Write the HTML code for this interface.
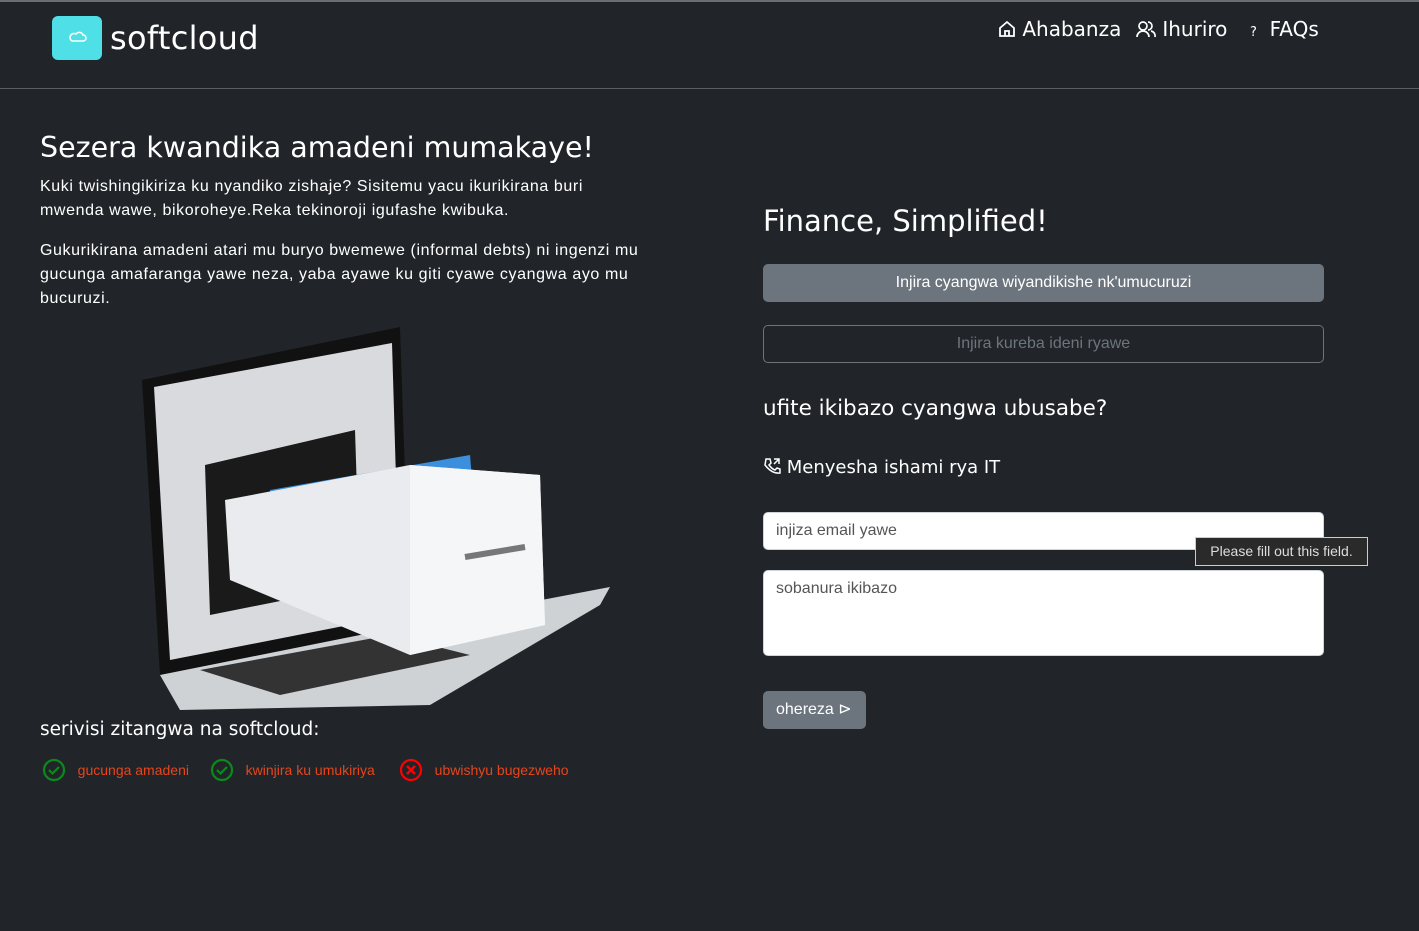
<!DOCTYPE html>
<html><head><meta charset="utf-8"><style>
*{box-sizing:border-box;margin:0;padding:0}
body{width:1419px;height:931px;background:#212529;color:#fff;font-family:"Liberation Sans",sans-serif;position:relative;overflow:hidden}
.top{position:absolute;left:0;top:0;width:1419px;height:2px;background:#6b6f74}
.hdr{position:absolute;left:0;top:88px;width:1419px;height:1px;background:#5a5e63}
.logo{position:absolute;left:52px;top:16px;width:50px;height:44px;background:#4ee0e6;border-radius:6px}
.brand{position:absolute;left:110px;top:19px;font-size:32px;font-family:"DejaVu Sans",sans-serif;letter-spacing:0.3px}
.nav{position:absolute;top:17px;font-size:20px;font-family:"DejaVu Sans",sans-serif}
h1{position:absolute;left:40px;top:131px;font-size:28.5px;font-weight:normal;font-family:"DejaVu Sans",sans-serif}
.p{position:absolute;left:40px;font-size:16px;line-height:24px;letter-spacing:0.6px;width:600px}
h2{position:absolute;left:763px;top:204px;font-size:29px;font-weight:normal;font-family:"DejaVu Sans",sans-serif}
.b1{position:absolute;left:763px;top:264px;width:561px;height:38px;background:#6c757d;border-radius:5px;text-align:center;line-height:38px;font-size:16px}
.b2{position:absolute;left:763px;top:325px;width:561px;height:38px;border:1px solid #6c757d;border-radius:5px;text-align:center;line-height:36px;font-size:16px;color:#6c757d}
h3{position:absolute;left:763px;top:396px;font-size:21.5px;font-weight:normal;font-family:"DejaVu Sans",sans-serif}
.it{position:absolute;left:763px;top:457px;font-size:18px;font-family:"DejaVu Sans",sans-serif}
.in{position:absolute;left:763px;width:561px;background:#fff;border:1px solid #ced4da;border-radius:5px;color:#555;font-size:16px;padding:9px 12px}
.tip{position:absolute;left:1195px;top:537px;width:173px;height:29px;background:#2a2a2a;border:1px solid #ccc;font-size:14px;line-height:27px;text-align:center;color:#ddd}
.send{position:absolute;left:763px;top:691px;width:103px;height:38px;background:#6c757d;border-radius:5px;font-size:16px;line-height:38px;padding-left:13px}
.svc{position:absolute;left:40px;top:719px;font-size:18.5px;font-family:"DejaVu Sans",sans-serif}
.ck{position:absolute;top:758px;font-size:14px;color:#e8441a;line-height:24px}
</style></head><body>
<div class="top"></div>
<div class="logo"><svg width="50" height="44"><path d="M20 25 h11 a3 3 0 0 0 0-6 a4 4 0 0 0-7-1 a3 3 0 0 0-4 7z" fill="none" stroke="#fff" stroke-width="1.5"/></svg></div>
<div class="brand">softcloud</div>
<div class="nav" style="left:998px"><svg width="18" height="18" style="vertical-align:-2px"><path d="M2 8 L9 2 L16 8 V16 H2Z M7 16 V11 H11 V16" fill="none" stroke="#fff" stroke-width="1.8"/></svg> Ahabanza</div>
<div class="nav" style="left:1136px"><svg width="20" height="18" style="vertical-align:-2px"><circle cx="7" cy="6" r="4" fill="none" stroke="#fff" stroke-width="1.7"/><path d="M1 17 a6 6 0 0 1 12 0 M12 2 a4 4 0 0 1 0 8 M15 11 a5 5 0 0 1 4 6" fill="none" stroke="#fff" stroke-width="1.7"/></svg> Ihuriro</div>
<div class="nav" style="left:1250px"><span style="font-size:13px">?</span>&nbsp; FAQs</div>
<div class="hdr"></div>
<h1>Sezera kwandika amadeni mumakaye!</h1>
<div class="p" style="top:175px">Kuki twishingikiriza ku nyandiko zishaje? Sisitemu yacu ikurikirana buri mwenda wawe, bikoroheye.Reka tekinoroji igufashe kwibuka.</div>
<div class="p" style="top:239px">Gukurikirana amadeni atari mu buryo bwemewe (informal debts) ni ingenzi mu gucunga amafaranga yawe neza, yaba ayawe ku giti cyawe cyangwa ayo mu bucuruzi.</div>
<svg style="position:absolute;left:130px;top:325px" width="490" height="385">
<path d="M12 55 L270 2 L280 300 L30 350Z" fill="#111"/>
<path d="M24 62 L262 18 L270 290 L40 335Z" fill="#d8dadd"/>
<path d="M75 140 L225 105 L230 260 L80 290Z" fill="#1a1a1a"/>
<path d="M30 350 L280 300 L480 262 L470 280 L300 380 L50 385Z" fill="#cfd2d5"/>
<path d="M70 345 L260 310 L340 330 L150 370Z" fill="#333"/>
<path d="M140 165 L340 130 L345 190 L145 225Z" fill="#3b8fdc"/>
<path d="M95 175 L280 140 L410 150 L415 300 L280 330 L100 255Z" fill="#e9ebee"/>
<path d="M280 140 L410 150 L415 300 L280 330Z" fill="#f5f6f7"/>
<path d="M335 232 L395 222" stroke="#777" stroke-width="6"/>
</svg>
<div class="svc">serivisi zitangwa na softcloud:</div>
<div class="ck" style="left:42px"><svg width="24" height="24" style="vertical-align:-7px"><circle cx="12" cy="12" r="10" fill="none" stroke="#0a8a1a" stroke-width="2.2"/><path d="M7 12 l3.5 3.5 l6.5-6.5" fill="none" stroke="#0a8a1a" stroke-width="2.2"/></svg>&nbsp;&nbsp; gucunga amadeni</div>
<div class="ck" style="left:210px"><svg width="24" height="24" style="vertical-align:-7px"><circle cx="12" cy="12" r="10" fill="none" stroke="#0a8a1a" stroke-width="2.2"/><path d="M7 12 l3.5 3.5 l6.5-6.5" fill="none" stroke="#0a8a1a" stroke-width="2.2"/></svg>&nbsp;&nbsp; kwinjira ku umukiriya</div>
<div class="ck" style="left:399px"><svg width="24" height="24" style="vertical-align:-7px"><circle cx="12" cy="12" r="10" fill="none" stroke="#f00" stroke-width="2.2"/><path d="M8 8 l8 8 M16 8 l-8 8" stroke="#f00" stroke-width="2.5"/></svg>&nbsp;&nbsp; ubwishyu bugezweho</div>
<h2>Finance, Simplified!</h2>
<div class="b1">Injira cyangwa wiyandikishe nk'umucuruzi</div>
<div class="b2">Injira kureba ideni ryawe</div>
<h3>ufite ikibazo cyangwa ubusabe?</h3>
<div class="it"><svg width="18" height="18" style="vertical-align:-2px"><path d="M3 2 L7 2 L8 6 L6 8 Q9 12 12 13 L14 11 L17 12 V16 Q9 17 2 8 Z M11 2 h5 v5 M16 2 l-5 5" fill="none" stroke="#fff" stroke-width="1.5"/></svg> Menyesha ishami rya IT</div>
<div class="in" style="top:512px;height:38px">injiza email yawe</div>
<div class="in" style="top:570px;height:86px">sobanura ikibazo</div>
<div class="tip">Please fill out this field.</div>
<div class="send">ohereza ⊳</div>
</body></html>
